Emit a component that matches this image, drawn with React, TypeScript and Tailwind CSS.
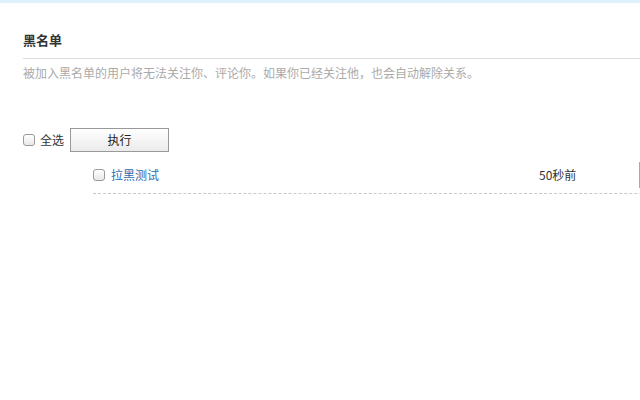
import React from "react";

const font = { fontFamily: '"Noto Sans CJK SC", "Noto Sans", sans-serif' };

function Check() {
  return (
    <span className="inline-block w-[12px] h-[12px] rounded-[3px] border border-[#9a9a9a] bg-gradient-to-b from-white to-[#e8e8e8] shrink-0" />
  );
}

export default function App() {
  return (
    <div className="w-[640px] h-[400px] overflow-hidden bg-white text-[12px] text-[#333]" style={font}>
      <div className="h-[3px] bg-[#def2f9]" />
      <div className="pl-[23px]">
        <div className="pt-[28px] h-[56px] border-b border-[#dddddd] text-[13px] font-bold leading-[18px] text-[#333]">
          黑名单
        </div>
        <div className="pt-[6px] text-[12px] leading-[16px] text-[#aaaaaa]">
          被加入黑名单的用户将无法关注你、评论你。如果你已经关注他，也会自动解除关系。
        </div>
        <div className="mt-[47px] flex items-center h-[24px]">
          <Check />
          <span className="ml-[5px] leading-[16px]">全选</span>
          <button className="ml-[6px] w-[99px] h-[24px] border border-[#999] bg-gradient-to-b from-white to-[#ebebeb] text-[12px] text-[#222] leading-[16px]">
            执行
          </button>
        </div>
        <div className="ml-[70px] mt-[10px] w-[800px] flex items-center h-[32px] pb-[5px] border-b border-dashed border-[#c8c8c8]">
          <Check />
          <a className="ml-[6px] w-[428px] text-[#2a6db5] leading-[16px]">拉黑测试</a>
          <span className="w-[100px] leading-[16px]">50秒前</span>
          <span className="w-[60px] h-[26px] border border-[#aaa] bg-gradient-to-b from-white to-[#ebebeb]" />
        </div>
      </div>
    </div>
  );
}
